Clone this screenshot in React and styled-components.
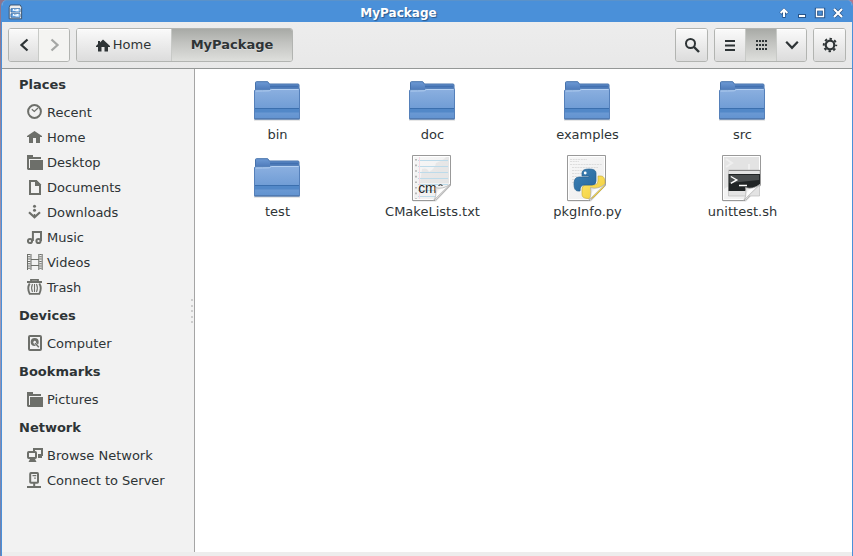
import React from 'react';
import styled, { createGlobalStyle, css } from 'styled-components';

const Global = createGlobalStyle`
  * { box-sizing: border-box; }
  body { margin: 0; overflow: hidden; }
`;

const Desktop = styled.div`
  width: 853px;
  height: 556px;
  padding-left: 1px;
  background: linear-gradient(#8d748d, #a59bb5 55%, #6c7fae) 0 0 / 400px 100% no-repeat #b07890;
  font: 13px/16px "DejaVu Sans", sans-serif;
  color: #2e3436;
`;

const Window = styled.div`
  height: 556px;
  display: flex;
  flex-direction: column;
  border: solid #4a90d9;
  border-width: 0 1px;
  border-radius: 6px 6px 0 0;
  background: #ededed;
  overflow: hidden;
`;

const TitleBar = styled.header`
  height: 22px;
  flex: none;
  display: grid;
  grid-template-columns: 80px 1fr 80px;
  align-items: center;
  padding: 0 8px 0 5px;
  background: #4a90d9;
  border-top: 1px solid #5b92c9;
`;

const Title = styled.h1`
  margin: 0;
  padding-top: 3px;
  text-align: center;
  transform: translateX(-27px);
  color: #fff;
  font: bold 12px/16px "DejaVu Sans", sans-serif;
  text-shadow: 1px 1px 1px #29578b;
`;

const WindowControls = styled.div`
  display: flex;
  justify-content: flex-end;
  gap: 6px;
  padding-top: 2px;
`;

const Toolbar = styled.nav`
  height: 47px;
  flex: none;
  display: flex;
  align-items: flex-start;
  gap: 6px;
  padding: 6px 6px 0 6px;
  background: linear-gradient(#ededed, #e8e8e8);
  border-bottom: 1px solid #949796;
`;

const ButtonGroup = styled.div`
  display: flex;
  height: 34px;
  border: 1px solid #b2b4b1;
  border-radius: 3px;
  overflow: hidden;
`;

const Button = styled.button`
  width: ${p => p.$width}px;
  height: 32px;
  padding: 0;
  display: flex;
  align-items: center;
  justify-content: center;
  gap: 2px;
  border: 0;
  background: linear-gradient(#fafafa, #dcdcdc);
  box-shadow: inset 0 1px #fff;
  color: #2e3436;
  font: inherit;
  & + & { border-left: 1px solid #c8cac7; }
  ${p => p.$active && css`
    font-weight: bold;
    background: linear-gradient(#a8aaa6, #c3c4c1 45%, #dedfdc);
    box-shadow: none;
    text-shadow: 0 1px #dedede;
  `}
  ${p => p.$disabled && css`
    background: #f4f4f2;
    color: #a5a7a5;
  `}
`;

const HomeButton = styled(Button)`
  padding-right: 2px;
`;

const Spacer = styled.div`flex: 1;`;

const Body = styled.div`
  flex: 1;
  display: flex;
  min-height: 0;
  margin-bottom: 4px;
`;

const Sidebar = styled.aside`
  width: 193px;
  display: flex;
  position: relative;
  flex-direction: column;
  background: #f2f2f2;
  border-right: 1px solid #a5a5a5;
`;

const Heading = styled.h2`
  height: 31px;
  margin: 0;
  padding: 8px 0 0 17px;
  font: bold 13px/16px "DejaVu Sans", sans-serif;
`;

const Place = styled.div`
  height: 25px;
  display: flex;
  gap: 4px;
  padding: 4px 0 0 25px;
`;

const PlaceLabel = styled.span`
  padding-top: 1px;
`;

const Grip = styled.div`
  position: absolute;
  right: 1px;
  top: 230px;
  display: grid;
  gap: 3.5px;
`;

const Dot = styled.i`
  width: 2px;
  height: 2px;
  background: #cdcdcd;
`;

const Files = styled.main`
  flex: 1;
  display: grid;
  grid-template-columns: repeat(4, 155px);
  grid-auto-rows: 77px;
  align-content: start;
  padding: 8px 0 0 4px;
  background: #fff;
`;

const File = styled.div`
  display: flex;
  flex-direction: column;
  align-items: center;
`;

const FileLabel = styled.span`
  margin-top: 2px;
  padding-left: 2px;
`;

const IconBox = styled.svg`
  display: block;
  flex: none;
  width: ${p => p.$size || 16}px;
  height: ${p => p.$size || 16}px;
`;

const Icon = ({ size = 16, children }) => (
  <IconBox $size={size} viewBox={`0 0 ${size} ${size}`} fill="none">{children}</IconBox>
);

const G = '#6d6f6a';
const placeIcons = {
  recent: <><circle cx="7.5" cy="7.5" r="6.4" stroke={G} strokeWidth="2" /><path d="M4.8 5.2 7.3 7.5 11 4" stroke={G} strokeWidth="1.2" /></>,
  home: <path d="M7.5 2 15 7v1h-2v6H9V9H6v5H2V8H0V7z" fill={G} />,
  folder: <><path d="M0 1h6v2h8v2H2v10.5H0z" fill={G} /><path d="M3 6h13v10H1V14h2z" fill={G} /></>,
  document: <><path d="M3 2h6l4 4v9H3z" stroke={G} strokeWidth="2" /><path d="M8 1v6h6V5.5L9.5 1z" fill={G} /></>,
  download: <><path d="M2 8.3 7.5 13.3 13 8.3" stroke={G} strokeWidth="2.2" /><circle cx="7.5" cy="2.3" r="1.5" fill={G} /><circle cx="7.5" cy="6.3" r="1.5" fill={G} /><path d="M7.5 10v3" stroke={G} strokeWidth="1.5" /></>,
  music: <g stroke={G} strokeWidth="2"><circle cx="3" cy="12" r="2.1" /><circle cx="11.5" cy="12" r="2.1" /><path d="M5.9 12V3H14v9" /></g>,
  video: <g stroke={G}><path d="M.5 0v16M4 0v16M11.8 0v16M15.2 0v16M4 5.5h8M4 11.5h8" /><path d="M2.2 0v16M13.5 0v16" strokeWidth="2.4" strokeDasharray="1 1.3" /></g>,
  trash: <g stroke={G}><path d="M0 3h15M4 2V.8h7V2" strokeWidth="1.8" /><path d="M2.7 4.5Q-.2 9 2.7 14.9h9.6Q15.2 9 12.3 4.5" strokeWidth="1.9" /><path d="M5.5 5q-1.8 4 0 8M7.5 5v8M9.5 5q1.8 4 0 8" strokeWidth="1.1" /></g>,
  disk: <><rect x="2" y="1" width="12" height="14" rx="1" stroke={G} strokeWidth="2" /><circle cx="7.7" cy="7" r="4" fill={G} /><path d="m7 7 4.5 5" stroke="#f2f2f2" strokeWidth="2.5" /><path d="m8 8 3.8 4.2" stroke={G} strokeWidth="1.5" /><circle cx="7.7" cy="7" r="1.2" fill="#f2f2f2" /></>,
  network: <><path d="M7 4V2h8v6h-4" stroke={G} strokeWidth="2" /><path d="M11 7h3v2h1v2h-4z" fill={G} /><rect x="1" y="5" width="8" height="6" rx=".7" fill="#f2f2f2" stroke={G} strokeWidth="2" /><path d="M3 12h5l1.5 3h-8z" fill={G} /></>,
  server: <g stroke={G}><rect x="3.2" y="1.1" width="7.8" height="9.6" rx=".8" strokeWidth="2" /><path d="M7.2 11v4M0 15h14" strokeWidth="2" /><path d="M5.5 3.6h3.8M7.2 6.2h1.6" strokeWidth="1.2" /></g>,
};

const sections = [
  ['Places', [['recent', 'Recent'], ['home', 'Home'], ['folder', 'Desktop'], ['document', 'Documents'], ['download', 'Downloads'], ['music', 'Music'], ['video', 'Videos'], ['trash', 'Trash']]],
  ['Devices', [['disk', 'Computer']]],
  ['Bookmarks', [['folder', 'Pictures']]],
  ['Network', [['network', 'Browse Network'], ['server', 'Connect to Server']]],
];

const Folder = () => (
  <Icon size={48}>
    <path d="M1 43h46" stroke="#bbb" opacity=".7" />
    <path d="M2.5 15V5.5q0-.8 1-.8H14q1.3 0 1.6 1L16.4 7H45q1 0 1 1v7z" fill="url(#folderBack)" stroke="#4672ac" />
    <path d="M17 9.5H45" stroke="#4270b0" strokeWidth="2" />
    <path d="M1.5 41.8V14q0-1.2 1.2-1.2h13q1.5 0 2-1.3h28q.8 0 .8 1v29.3z" fill="url(#folderFront)" stroke="#5580ba" />
    <path d="M2.5 14q7 0 13.8-.2l2-1.3h27.2" stroke="#b4d0f2" />
    <path d="M2 31.5h44v4H2z" fill="#5288c8" />
    <path d="M2 31.5h44" stroke="#3b6fae" />
    <path d="M1.5 42h45" stroke="#4168a0" />
  </Icon>
);

const Sheet = ({ children }) => (
  <Icon size={48}>
    <path d="M5 2h38v29.5L28 47.5H5z" fill="#777" opacity=".25" />
    <path d="M4.5 1.5h38V31L27 46.5H4.5z" fill="url(#sheetFill)" stroke="#999" />
    <path d="M5.5 2.5h36v28L27 45.5H5.5z" stroke="#fff" />
    {children}
    <path d="M25.5 46.5q3.5-4 2-13 7 2.5 15-3.5z" fill="url(#curl)" stroke="#aaa" strokeWidth=".7" />
  </Icon>
);

const SheetText = styled.text`
  font: 15.5px "Liberation Sans", sans-serif;
  fill: #222;
`;

const CMakeIcon = () => (
  <Sheet>
    <path d="M14 15q5-2 7 3 6-3 7-9 8-3 10-6h3v26H12z" fill="#ddd" opacity=".55" />
    <path d="M10 6.5h30M10 12.5h30M10 18.5h30M10 24.5h30M10 30.5h30M10 36.5h17M10 42.5h17" stroke="#bddbea" />
    <path d="M11.5 3v42" stroke="#f5dae3" />
    <path d="M8 5v40" stroke="#aaa" strokeWidth="1.6" strokeDasharray="1.6 4" />
    <SheetText x="10.2" y="39" textLength="18.5" lengthAdjust="spacingAndGlyphs">cm</SheetText>
    <path d="M30.5 31.5q2-1.5 4 0" stroke="#222" />
  </Sheet>
);

const PythonIcon = () => (
  <Sheet>
    <path d="M7 5.5h17M7 7.5h9M7 10.5h32M9 13.5h26M9 16.5h12M9 19.5h10M9 22.5h5M9 25.5h4M9 28.5h3" stroke="#ccc" strokeWidth=".6" strokeDasharray="2 .7" />
    <path d="M35 22h3q4 0 4 7l-1 4-10 10q-2 2-7 1.5-5-.5-5-4V35q0-4 4-4h8q4 0 4-4z" fill="url(#pyYellow)" stroke="#c5a830" strokeWidth=".6" />
    <path d="M19 22v-3q0-4 7-4t7 4v8q0 4-4 4h-8q-4 0-4 6h-2q-4 0-4-7 0-7 5-7h10v-1z" fill="url(#pyBlue)" stroke="#25608f" strokeWidth=".7" />
    <circle cx="22.2" cy="19" r="1.4" fill="#fff" />
  </Sheet>
);

const ShellIcon = () => (
  <Sheet>
    <path d="M6 3h35v18Q25 22 6 35z" fill="#e3e3e3" />
    <path d="m8 5 6 4-6 4M31 10v7h10" stroke="#efefef" strokeWidth="2" />
    <path d="M10.5 16h31v26h-31z" fill="#e3e3e3" stroke="#bbb" strokeWidth=".7" />
    <path d="M10.5 20H42v10.5q-6 7-15 6v.5H10.5z" fill="#202425" />
    <path d="M11 16.5h31" stroke="#888" />
    <path d="M11.5 21h29.5v5L11.5 29z" fill="#484c4d" />
    <path d="m12.8 22.5 6 3.4-6 3.4M21 31.5h8" stroke="#fff" strokeWidth="1.4" />
  </Sheet>
);

const files = [
  ['bin', Folder], ['doc', Folder], ['examples', Folder], ['src', Folder],
  ['test', Folder], ['CMakeLists.txt', CMakeIcon], ['pkgInfo.py', PythonIcon], ['unittest.sh', ShellIcon],
];

const HiddenDefinitions = styled.svg`
  position: absolute;
  width: 0;
  height: 0;
`;

const Definitions = () => (
  <HiddenDefinitions>
    <defs>
      <linearGradient id="folderBack" x2="0" y2="1"><stop stopColor="#6d9ad5" /><stop offset="1" stopColor="#4672b2" /></linearGradient>
      <linearGradient id="folderFront" x2="0" y2="1"><stop stopColor="#8cb0e0" /><stop offset="1" stopColor="#6293d0" /></linearGradient>
      <linearGradient id="sheetFill" x2="1" y2="1"><stop stopColor="#f7f7f7" /><stop offset="1" stopColor="#eee" /></linearGradient>
      <linearGradient id="curl" x2="1" y2="1"><stop stopColor="#bbb" /><stop offset=".4" stopColor="#fff" /><stop offset="1" stopColor="#ccc" /></linearGradient>
      <linearGradient id="pyBlue" x2="1" y2="1"><stop stopColor="#3c82b7" /><stop offset="1" stopColor="#29679c" /></linearGradient>
      <linearGradient id="pyYellow" x2="1" y2="1"><stop stopColor="#ffe66a" /><stop offset="1" stopColor="#f0cc38" /></linearGradient>
    </defs>
  </HiddenDefinitions>
);

export default function App() {
  return (
    <Desktop>
      <Global />
      <Definitions />
      <Window>
        <TitleBar>
          <Icon>
            <path d="M3.2 1h10l1.4 2.5v11.3H2.2V3.5z" fill="#eee" stroke="#344d68" strokeWidth=".9" />
            <path d="M4 4.8h9v3.2H4zM4 9.8h9v3.4H4z" fill="#75b2ef" stroke="#2d65a2" strokeWidth=".9" />
            <path d="M8.5 5H12.5v2.6h-4zM8.5 10h4v2.8h-4z" fill="#b9dcfb" />
            <path d="M6.5 5v1.2h4V5M6.5 10v1.2h4V10" stroke="#fff" strokeWidth="1.1" />
          </Icon>
          <Title>MyPackage</Title>
          <WindowControls>
            <Icon size={12}><path d="M6 11V3M2.5 6.5 6 3l3.5 3.5" stroke="#28558a" strokeWidth="3.2" /><path d="M6 10V3M2.6 6 6 2.6 9.4 6" stroke="#fff" strokeWidth="2" /></Icon>
            <Icon size={12}><path d="M2 7h8v4H2z" fill="#28558a" /><path d="M3 8h6v2H3z" fill="#fff" /></Icon>
            <Icon size={12}><path d="M2.5 2.5h7v7h-7z" stroke="#28558a" strokeWidth="3.4" /><path d="M2.5 2.5h7v7h-7z" stroke="#fff" strokeWidth="1.3" /><path d="M2 2.5h8" stroke="#fff" strokeWidth="2" /></Icon>
            <Icon size={12}><path d="m2 2 8 8m0-8-8 8" stroke="#28558a" strokeWidth="3.6" /><path d="m2 2 8 8m0-8-8 8" stroke="#fff" strokeWidth="2.2" /></Icon>
          </WindowControls>
        </TitleBar>
        <Toolbar>
          <ButtonGroup>
            <Button $width={29}><Icon><path d="M11.5 2.5 5.5 8l6 5.5" stroke="currentColor" strokeWidth="2.3" /></Icon></Button>
            <Button $width={31} $disabled><Icon><path d="m5.5 2.5 6 5.5-6 5.5" stroke="currentColor" strokeWidth="2.3" /></Icon></Button>
          </ButtonGroup>
          <ButtonGroup>
            <HomeButton $width={94}><Icon><path d="M8 2.5 15 9v1h-2v4.5H9.5V10h-3v4.5H3V10H1V9l2-2V4h2v1.5z" fill="currentColor" /></Icon>Home</HomeButton>
            <Button $width={121} $active>MyPackage</Button>
          </ButtonGroup>
          <Spacer />
          <ButtonGroup><Button $width={31}><Icon><circle cx="6.5" cy="6.5" r="4.5" stroke="currentColor" strokeWidth="2" /><path d="m10 10 5 5" stroke="currentColor" strokeWidth="2.4" /></Icon></Button></ButtonGroup>
          <ButtonGroup>
            <Button $width={30}><Icon><path d="M3 4h10M3 8.5h10M3 13h10" stroke="currentColor" strokeWidth="2" /></Icon></Button>
            <Button $width={31} $active><Icon><path d="M3 4h11M3 8h11M3 12h11" stroke="currentColor" strokeWidth="2" strokeDasharray="2 1" /></Icon></Button>
            <Button $width={30}><Icon><path d="m2.2 4.8 5.8 6 5.8-6" stroke="currentColor" strokeWidth="2.2" /></Icon></Button>
          </ButtonGroup>
          <ButtonGroup><Button $width={31}><Icon><circle cx="8" cy="8" r="4.3" stroke="currentColor" strokeWidth="2.2" /><circle cx="8" cy="8" r="6.2" stroke="currentColor" strokeWidth="2" strokeDasharray="2.435 2.434" strokeDashoffset="1.217" /></Icon></Button></ButtonGroup>
        </Toolbar>
        <Body>
          <Sidebar>
            {sections.map(([title, places]) => (
              <React.Fragment key={title}>
                <Heading>{title}</Heading>
                {places.map(([icon, label]) => <Place key={label}><Icon>{placeIcons[icon]}</Icon><PlaceLabel>{label}</PlaceLabel></Place>)}
              </React.Fragment>
            ))}
            <Grip>{[0, 1, 2, 3, 4].map(n => <Dot key={n} />)}</Grip>
          </Sidebar>
          <Files>
            {files.map(([name, Picture]) => <File key={name}><Picture /><FileLabel>{name}</FileLabel></File>)}
          </Files>
        </Body>
      </Window>
    </Desktop>
  );
}
